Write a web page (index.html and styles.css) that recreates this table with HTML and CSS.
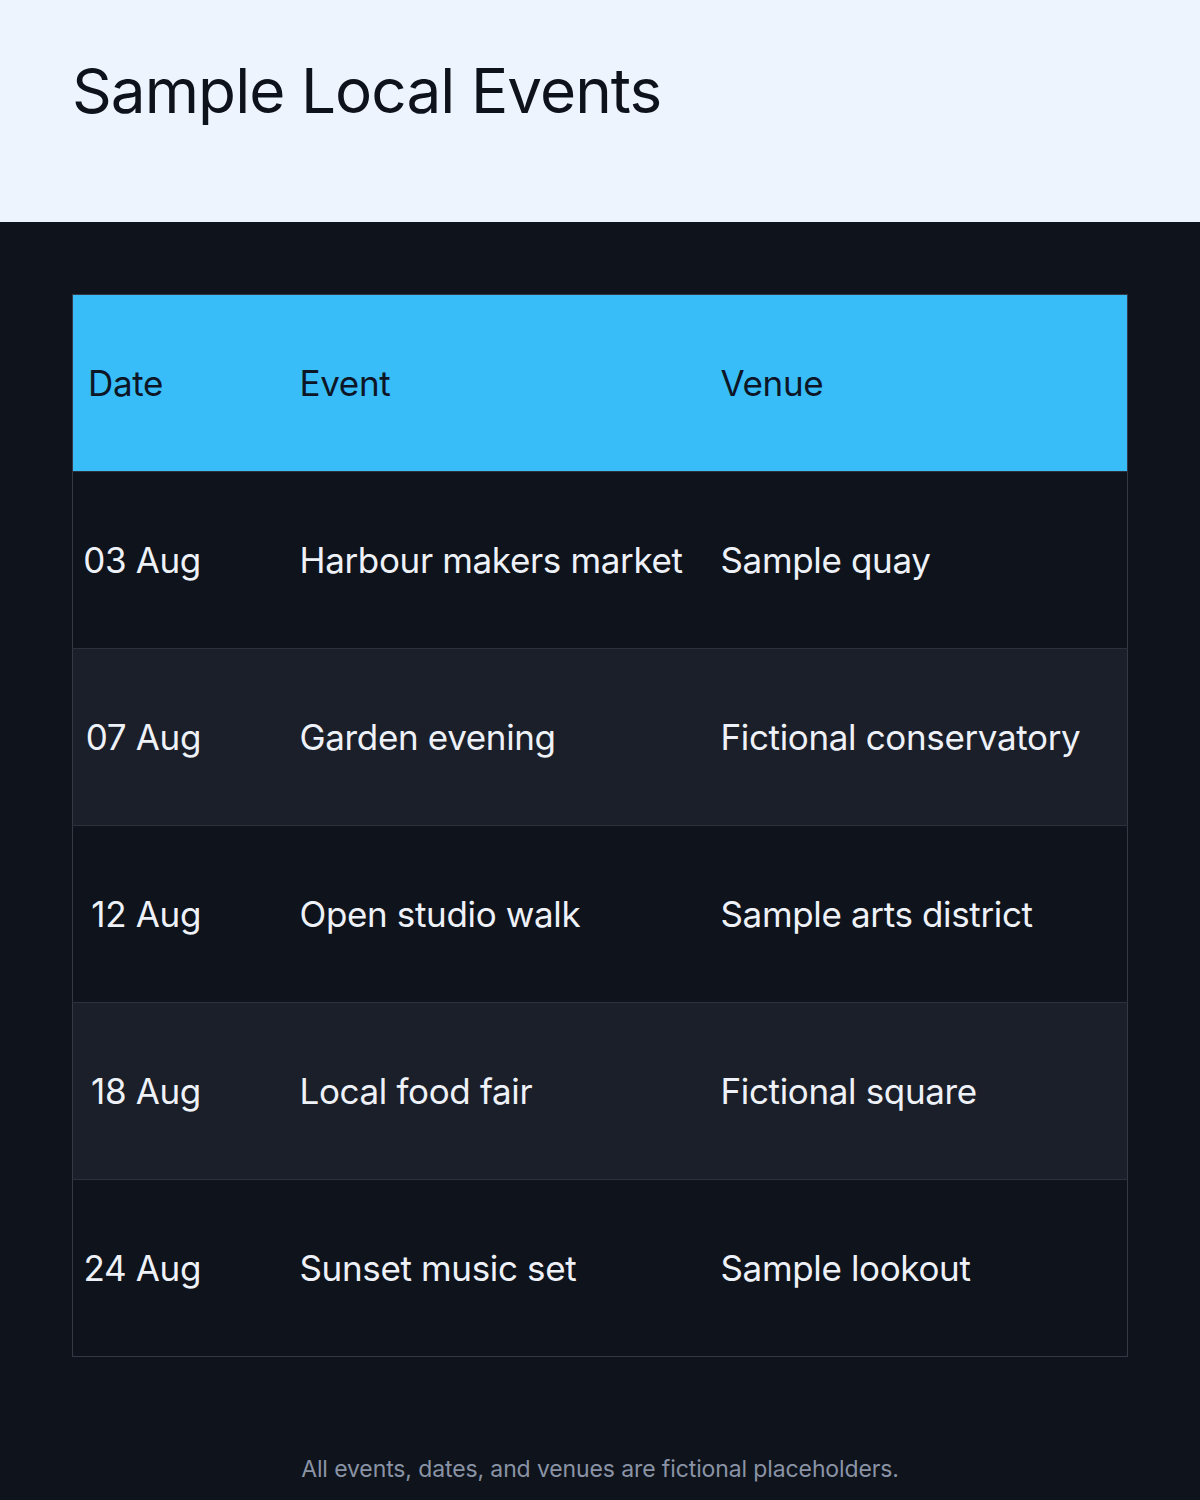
FILE: index.html
```html
<!DOCTYPE html>
<html lang="en">
<head>
<meta charset="utf-8">
<title>Sample Local Events</title>
<link rel="stylesheet" href="styles.css">
</head>
<body>
<header class="page-header">
  <h1 class="title">Sample Local Events</h1>
</header>
<main class="content">
  <table class="events">
    <colgroup>
      <col class="col-date">
      <col class="col-event">
      <col class="col-venue">
    </colgroup>
    <thead>
      <tr><th>Date</th><th>Event</th><th>Venue</th></tr>
    </thead>
    <tbody>
      <tr><td class="date"><span class="date-text">03 Aug</span></td><td>Harbour makers market</td><td>Sample quay</td></tr>
      <tr><td class="date"><span class="date-text">07 Aug</span></td><td>Garden evening</td><td>Fictional conservatory</td></tr>
      <tr><td class="date"><span class="date-text">12 Aug</span></td><td>Open studio walk</td><td>Sample arts district</td></tr>
      <tr><td class="date"><span class="date-text">18 Aug</span></td><td>Local food fair</td><td>Fictional square</td></tr>
      <tr><td class="date"><span class="date-text">24 Aug</span></td><td>Sunset music set</td><td>Sample lookout</td></tr>
    </tbody>
  </table>
  <p class="note">All events, dates, and venues are fictional placeholders.</p>
</main>
</body>
</html>
```

FILE: styles.css
```css
* { box-sizing: border-box; }
html, body { margin: 0; padding: 0; }
body {
  font-family: Inter, "Noto Sans", sans-serif;
  background: #0f131c;
  width: 1200px;
  height: 1500px;
  overflow: hidden;
}
.page-header {
  background: #eef4fd;
  height: 222px;
  padding: 60px 72px 0;
}
.title {
  margin: 0;
  font-size: 62px;
  font-weight: 400;
  letter-spacing: -0.015em;
  color: #0e121b;
  line-height: 1;
}
.content {
  padding: 72px 72px 0;
}
.events {
  width: 1056px;
  border-collapse: collapse;
  table-layout: fixed;
  border: 1px solid #343946;
}
.col-date { width: 212px; }
.col-event { width: 421px; }
.events th, .events td {
  height: 177px;
  padding: 0 15px;
  text-align: left;
  vertical-align: middle;
  font-size: 35px;
  font-weight: 400;
  line-height: 1.2;
  white-space: nowrap;
  letter-spacing: -0.01em;
}
.events th {
  background: #38bdf8;
  color: #0d1626;
}
.events td {
  color: #eef2f8;
  border-top: 1px solid #2c313c;
}
.events tbody tr:nth-child(even) td { background: #1b1f29; }
.date-text {
  display: inline-block;
  width: 124px;
  text-align: right;
  margin-left: -11px;
}
.note {
  margin: 98px 0 0;
  text-align: center;
  font-size: 23px;
  color: #8a93a5;
  letter-spacing: -0.005em;
}
```
